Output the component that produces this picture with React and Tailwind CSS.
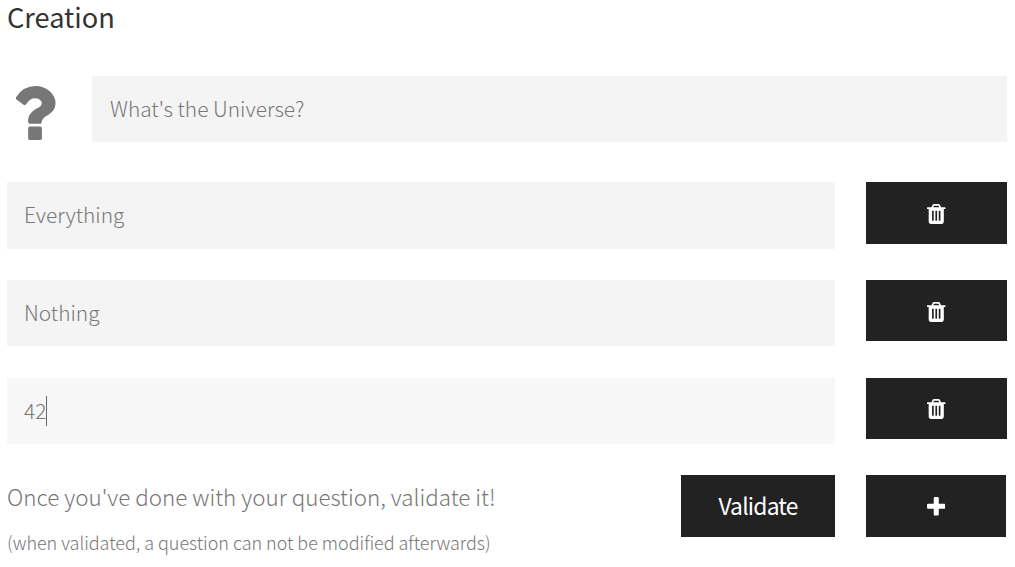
import React from "react";

function Glyph({ d, viewBox, className }) {
  return (
    <svg viewBox={viewBox} preserveAspectRatio="none" fill="currentColor" className={className} aria-hidden="true">
      <path d={d} />
    </svg>
  );
}

const QUESTION =
  "M1088 1256v240q0 16-12 28t-28 12h-240q-16 0-28-12t-12-28v-240q0-16 12-28t28-12h240q16 0 28 12t12 28zm316-600q0 54-15.5 101t-35 76.5-55 59.5-57.5 43.5-61 35.5q-41 23-68.5 65t-27.5 67q0 17-12 32.5t-28 15.5h-240q-15 0-25.5-18.5t-10.5-37.5v-45q0-83 65-156.5t143-108.5q59-27 84-56t25-76q0-42-46.5-74t-107.5-32q-65 0-108 29-35 25-107 115-13 16-31 16-12 0-25-8l-164-125q-13-10-15.5-25t5.5-28q160-266 464-266 80 0 161 31t146 83 106 127.5 41 158.5z";
const TRASH =
  "M704 1376v-704q0-14-9-23t-23-9h-64q-14 0-23 9t-9 23v704q0 14 9 23t23 9h64q14 0 23-9t9-23zm256 0v-704q0-14-9-23t-23-9h-64q-14 0-23 9t-9 23v704q0 14 9 23t23 9h64q14 0 23-9t9-23zm256 0v-704q0-14-9-23t-23-9h-64q-14 0-23 9t-9 23v704q0 14 9 23t23 9h64q14 0 23-9t9-23zm-544-992h448l-48-117q-7-9-17-11h-317q-10 2-17 11zm928 32v64q0 14-9 23t-23 9h-96v948q0 83-47 143.5t-113 60.5h-832q-66 0-113-58.5t-47-141.5v-952h-96q-14 0-23-9t-9-23v-64q0-14 9-23t23-9h309l70-167q15-37 54-63t79-26h320q40 0 79 26t54 63l70 167h309q14 0 23 9t9 23z";
const PLUS =
  "M1600 736v192q0 40-28 68t-68 28h-416v416q0 40-28 68t-68 28h-192q-40 0-68-28t-28-68v-416h-416q-40 0-68-28t-28-68v-192q0-40 28-68t68-28h416v-416q0-40 28-68t68-28h192q40 0 68 28t28 68v416h416q40 0 68 28t28 68z";

function Answer({ text, focused, fieldClass, buttonClass }) {
  return (
    <div className="flex items-start gap-[31px]">
      <div className={`flex w-[828px] items-center pl-[17px] ${fieldClass}`}>
        <span className="pb-[2px] text-[20.9px] leading-[30px]">{text}</span>
        {focused && <span className="h-[30px] w-px bg-[#666]" />}
      </div>
      <button className={`flex w-[141px] justify-center bg-[#222] text-white ${buttonClass}`} aria-label="Delete">
        <Glyph d={TRASH} viewBox="192 128 1408 1536" className="h-5 w-[18.5px]" />
      </button>
    </div>
  );
}

export default function App() {
  return (
    <main className="h-[567px] w-[1015px] bg-white pl-[7px] font-['Noto_Sans_CJK_SC',sans-serif] font-light text-[#777]">
      <div className="flex h-[76px] items-start">
        <h1 className="text-[27.2px] leading-[32px] font-normal text-[#333]">Creation</h1>
      </div>
      <div className="flex h-[106px] items-start">
        <div className="w-[85px] pt-[10px] pl-[9px]">
          <Glyph d={QUESTION} viewBox="486 256 918 1280" className="h-[54px] w-[39.5px]" />
        </div>
        <div className="flex h-[66px] w-[915px] items-center bg-[#f4f4f4] pb-[2px] pl-[18px] text-[20.9px] leading-[30px]">
          What's the Universe?
        </div>
      </div>
      <div className="flex flex-col">
        <div className="h-[98px]"><Answer text="Everything" fieldClass="h-[67px] bg-[#f4f4f4] pb-px" buttonClass="h-[62px] pt-[22px]" /></div>
        <div className="h-[98px]"><Answer text="Nothing" fieldClass="h-[66px] bg-[#f4f4f4]" buttonClass="h-[61px] pt-[22px]" /></div>
        <div className="h-[97px]"><Answer text="42" focused fieldClass="h-[66px] bg-[#f7f7f7]" buttonClass="h-[61px] pt-[21px]" /></div>
      </div>
      <div className="flex items-start">
        <div className="w-[674px] whitespace-nowrap">
          <p className="pt-[3px] text-[22.4px] leading-[36px]">Once you've done with your question, validate it!</p>
          <p className="pt-[14px] text-[17.95px] leading-[28px]">(when validated, a question can not be modified afterwards)</p>
        </div>
        <button className="h-[62px] w-[154px] bg-[#222] text-[22.8px] leading-[30px] font-normal tracking-[-0.8px] text-white">Validate</button>
        <button className="ml-[31px] flex h-[62px] w-[140px] justify-center bg-[#222] pt-[22px] text-white" aria-label="Add">
          <Glyph d={PLUS} viewBox="192 128 1408 1408" className="h-[18.5px] w-[18.5px]" />
        </button>
      </div>
    </main>
  );
}
